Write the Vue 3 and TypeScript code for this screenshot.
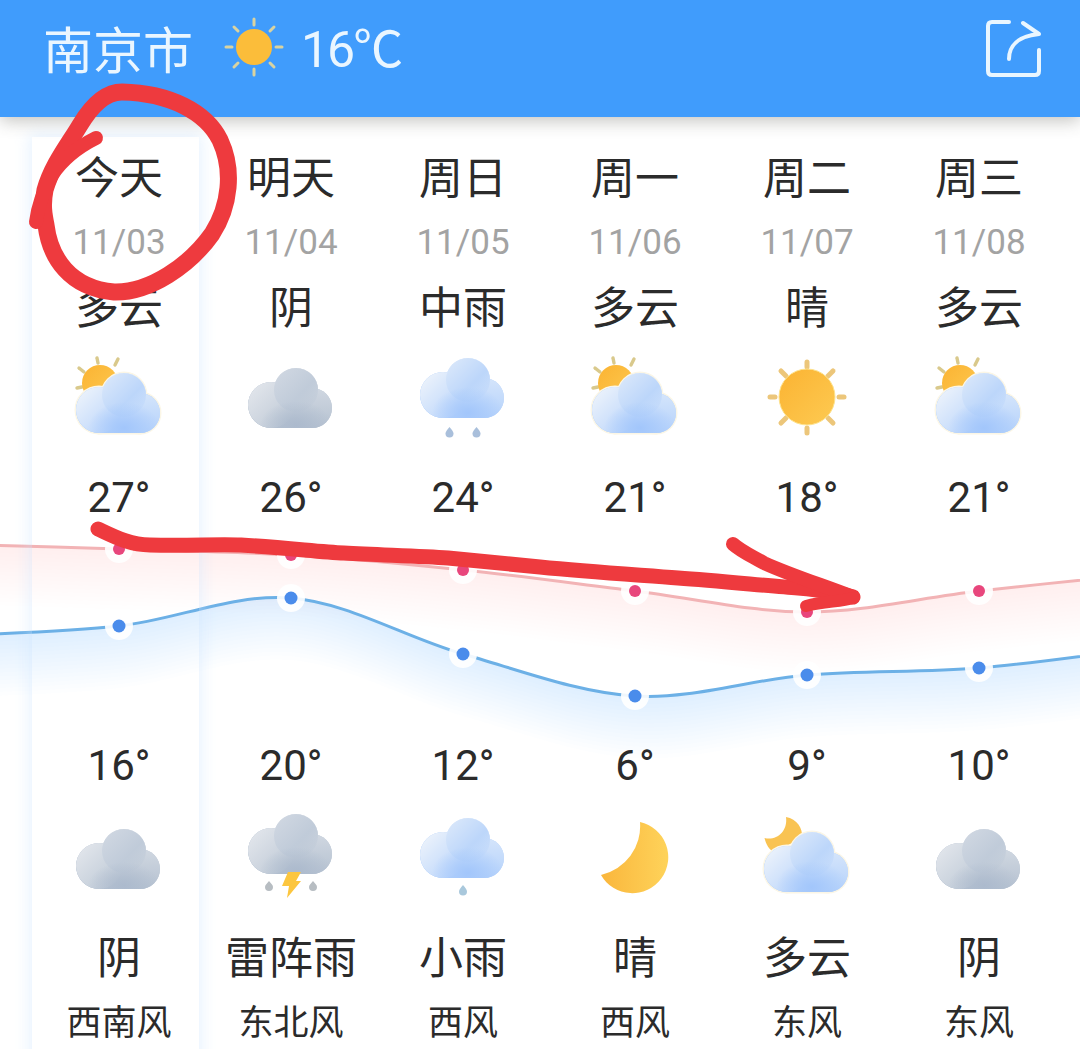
<script setup lang="ts">
type Pt = { x: number; y: number }
type Seg = { c1: Pt; c2: Pt; to: Pt }

const upper = [
  { name: '今天', date: '11/03', cond: '多云', icon: 'partly-day', high: 27 },
  { name: '明天', date: '11/04', cond: '阴', icon: 'overcast', high: 26 },
  { name: '周日', date: '11/05', cond: '中雨', icon: 'rain-mid', high: 24 },
  { name: '周一', date: '11/06', cond: '多云', icon: 'partly-day', high: 21 },
  { name: '周二', date: '11/07', cond: '晴', icon: 'sun', high: 18 },
  { name: '周三', date: '11/08', cond: '多云', icon: 'partly-day', high: 21 }
]
const lower = [
  { low: 16, icon: 'overcast', cond: '阴', wind: '西南风' },
  { low: 20, icon: 'thunder', cond: '雷阵雨', wind: '东北风' },
  { low: 12, icon: 'rain-light', cond: '小雨', wind: '西风' },
  { low: 6, icon: 'moon', cond: '晴', wind: '西风' },
  { low: 9, icon: 'partly-night', cond: '多云', wind: '东风' },
  { low: 10, icon: 'overcast', cond: '阴', wind: '东风' }
]

const CHART_TOP = 520
const xs = [119, 291, 463, 635, 807, 979]
const highY = [549, 555, 570, 591, 612, 591]
const lowY = [626, 598, 654, 696, 675, 668]

function points(ys: number[], start: number, end: number): Pt[] {
  const mid = ys.map((y, i) => ({ x: xs[i], y: y - CHART_TOP }))
  return [{ x: -53, y: start - CHART_TOP }, ...mid, { x: 1151, y: end - CHART_TOP }]
}

function segments(p: Pt[]): Seg[] {
  const out: Seg[] = []
  for (let i = 0; i < p.length - 1; i++) {
    const a = p[Math.max(i - 1, 0)]
    const b = p[i]
    const c = p[i + 1]
    const d = p[Math.min(i + 2, p.length - 1)]
    out.push({
      c1: { x: b.x + (c.x - a.x) / 6, y: b.y + (c.y - a.y) / 6 },
      c2: { x: c.x - (d.x - b.x) / 6, y: c.y - (d.y - b.y) / 6 },
      to: c
    })
  }
  return out
}

function linePath(p: Pt[]): string {
  const segs = segments(p)
  return `M${p[0].x} ${p[0].y}` + segs.map(s => ` C${s.c1.x} ${s.c1.y} ${s.c2.x} ${s.c2.y} ${s.to.x} ${s.to.y}`).join('')
}

function bandPath(p: Pt[], depth: number): string {
  const segs = segments(p)
  let d = linePath(p)
  const last = p[p.length - 1]
  d += ` L${last.x} ${last.y + depth}`
  for (let i = segs.length - 1; i >= 0; i--) {
    const s = segs[i]
    const prev = p[i]
    d += ` C${s.c2.x} ${s.c2.y + depth} ${s.c1.x} ${s.c1.y + depth} ${prev.x} ${prev.y + depth}`
  }
  return d + ' Z'
}

function bands(p: Pt[], reach: number): string[] {
  const list: string[] = []
  for (let i = 1; i <= 16; i++) list.push(bandPath(p, (reach * i) / 16))
  return list
}

const highPts = points(highY, 544, 573)
const lowPts = points(lowY, 636, 647)
const highLine = linePath(highPts)
const lowLine = linePath(lowPts)
const highBands = bands(highPts, 60)
const lowBands = bands(lowPts, 62)
const highDots = highPts.slice(1, -1)
const lowDots = lowPts.slice(1, -1)
</script>

<template>
  <svg class="defs" width="0" height="0" aria-hidden="true">
    <defs>
      <linearGradient id="g-grey" x1="0" y1="0" x2="0" y2="1">
        <stop offset="0" stop-color="#dde2e9" />
        <stop offset="1" stop-color="#b6c2d1" />
      </linearGradient>
      <linearGradient id="g-grey-left" x1="0" y1="0" x2="1" y2="1">
        <stop offset="0" stop-color="#e6e9ee" />
        <stop offset="1" stop-color="#b9c5d3" />
      </linearGradient>
      <linearGradient id="g-grey-mid" x1="0" y1="0" x2="1" y2="1">
        <stop offset="0" stop-color="#d2d9e3" />
        <stop offset="0.6" stop-color="#c0cbd9" />
        <stop offset="0.95" stop-color="#b9c5d4" stop-opacity="0" />
      </linearGradient>
      <radialGradient id="g-grey-core" cx="0.5" cy="0.5" r="0.5">
        <stop offset="0" stop-color="#acbacd" />
        <stop offset="1" stop-color="#acbacd" stop-opacity="0" />
      </radialGradient>
      <linearGradient id="g-blue" x1="0" y1="0" x2="0" y2="1">
        <stop offset="0" stop-color="#e4eefb" />
        <stop offset="1" stop-color="#b5d2fb" />
      </linearGradient>
      <linearGradient id="g-blue-left" x1="0" y1="0" x2="1" y2="1">
        <stop offset="0" stop-color="#f2f6fb" />
        <stop offset="1" stop-color="#b2d0fb" />
      </linearGradient>
      <linearGradient id="g-blue-mid" x1="0" y1="0" x2="1" y2="1">
        <stop offset="0" stop-color="#deeafa" />
        <stop offset="0.6" stop-color="#bcd6fa" />
        <stop offset="0.95" stop-color="#b5d2fb" stop-opacity="0" />
      </linearGradient>
      <radialGradient id="g-blue-core" cx="0.5" cy="0.5" r="0.5">
        <stop offset="0" stop-color="#a2c6fb" />
        <stop offset="1" stop-color="#a2c6fb" stop-opacity="0" />
      </radialGradient>
      <linearGradient id="g-sun" x1="0" y1="0" x2="1" y2="1">
        <stop offset="0" stop-color="#fbb332" />
        <stop offset="1" stop-color="#fdca52" />
      </linearGradient>
      <linearGradient id="g-moon" x1="0" y1="0" x2="1" y2="0">
        <stop offset="0" stop-color="#fab63c" />
        <stop offset="1" stop-color="#fed35a" />
      </linearGradient>

      <clipPath id="cloud-clip">
        <circle cx="30" cy="56" r="23" />
        <circle cx="55" cy="41" r="22" />
        <circle cx="71" cy="59" r="20" />
        <rect x="30" y="50" width="41" height="29" />
      </clipPath>

      <g id="cloud-shape">
        <circle cx="30" cy="56" r="23" />
        <circle cx="55" cy="41" r="22" />
        <circle cx="71" cy="59" r="20" />
        <rect x="30" y="50" width="41" height="29" />
      </g>

      <g id="cloud-grey">
        <use href="#cloud-shape" fill="#bcc7d5" />
        <g clip-path="url(#cloud-clip)">
          <rect x="0" y="19" width="100" height="60" fill="url(#g-grey)" />
          <circle cx="30" cy="56" r="23" fill="url(#g-grey-left)" />
          <circle cx="55" cy="41" r="22" fill="url(#g-grey-mid)" />
          <ellipse cx="55" cy="76" rx="36" ry="24" fill="url(#g-grey-core)" />
        </g>
      </g>

      <g id="cloud-blue">
        <use href="#cloud-shape" fill="#b8d3fa" />
        <g clip-path="url(#cloud-clip)">
          <rect x="0" y="19" width="100" height="60" fill="url(#g-blue)" />
          <circle cx="30" cy="56" r="23" fill="url(#g-blue-left)" />
          <circle cx="55" cy="41" r="22" fill="url(#g-blue-mid)" />
          <ellipse cx="55" cy="74" rx="36" ry="26" fill="url(#g-blue-core)" />
        </g>
      </g>

      <g id="i-overcast">
        <use href="#cloud-grey" />
      </g>

      <g id="i-partly-day">
        <g stroke="#d9c98c" stroke-width="3.4" stroke-linecap="round">
          <path d="M10 19 L15 23" />
          <path d="M28 9 L29 14" />
          <path d="M49 10 L46 16" />
          <path d="M8 39 L13 38" />
        </g>
        <circle cx="31" cy="34" r="18" fill="url(#g-sun)" />
        <g transform="translate(0 5)">
          <use href="#cloud-shape" fill="#fbf6e6" stroke="#fbf6e6" stroke-width="3" />
          <use href="#cloud-blue" />
        </g>
      </g>

      <g id="i-sun">
        <g stroke="#ecc67a" stroke-width="5" stroke-linecap="round">
          <path d="M50 13 L50 18" />
          <path d="M50 79 L50 84" />
          <path d="M13 48 L18 48" />
          <path d="M82 48 L87 48" />
          <path d="M24 22 L29 27" />
          <path d="M76 22 L71 27" />
          <path d="M24 74 L29 69" />
          <path d="M76 74 L71 69" />
        </g>
        <circle cx="50" cy="48" r="28" fill="url(#g-sun)" stroke="#fde28c" stroke-width="1" />
      </g>

      <g id="i-rain-mid">
        <g transform="translate(0 -10)">
          <use href="#cloud-blue" />
        </g>
        <path d="M36.500 78 C39 81 40.500 83 40.500 84.500 A4 4 0 0 1 32.500 84.500 C32.500 83 34 81 36.500 78 Z" fill="#a9bfdb" />
        <path d="M63.500 78 C66 81 67.500 83 67.500 84.500 A4 4 0 0 1 59.500 84.500 C59.500 83 61 81 63.500 78 Z" fill="#a9bfdb" />
      </g>

      <g id="i-rain-light">
        <g transform="translate(0 -11)">
          <use href="#cloud-blue" />
        </g>
        <path d="M50 75 C52.500 78 54 80 54 81.500 A4 4 0 0 1 46 81.500 C46 80 47.500 78 50 75 Z" fill="#a9c8dc" />
      </g>

      <g id="i-thunder">
        <g transform="translate(0 -15)">
          <use href="#cloud-grey" />
        </g>
        <path d="M47 62 L60 62 L55 71 L60 71 L46 88 L48 76 L41 76 Z" fill="#fcc63f" />
        <path d="M28 71 C30 73.500 32 75 32 77 A4 4 0 0 1 24 77 C24 75 26 73.500 28 71 Z" fill="#b7bdc2" />
        <path d="M72 71 C74 73.500 76 75 76 77 A4 4 0 0 1 68 77 C68 75 70 73.500 72 71 Z" fill="#b7bdc2" />
      </g>

      <g id="i-moon">
        <path d="M55 12 A36 36 0 1 1 16 65 A50 50 0 0 0 55 12 Z" fill="url(#g-moon)" />
      </g>

      <g id="i-partly-night">
        <path d="M29 7 C40 9 46 18 45 28 L17 42 C12 40 9 34 7.500 28 C19 31 31 22 29 7 Z" fill="#f9c352" />
        <g transform="translate(0 3)">
          <use href="#cloud-shape" fill="#fbf6e6" stroke="#fbf6e6" stroke-width="3" />
          <use href="#cloud-blue" />
        </g>
      </g>
    </defs>
  </svg>

  <main class="page">
    <header class="topbar">
      <h1 class="city">南京市</h1>
      <svg class="now-icon" viewBox="0 0 60 60" aria-hidden="true">
        <g stroke="#d9d3a0" stroke-width="3" stroke-linecap="round">
          <path d="M30 2 L30 8" />
          <path d="M30 52 L30 58" />
          <path d="M2 30 L8 30" />
          <path d="M52 30 L58 30" />
          <path d="M10 10 L14 14" />
          <path d="M50 10 L46 14" />
          <path d="M10 50 L14 46" />
          <path d="M50 50 L46 46" />
        </g>
        <circle cx="30" cy="30" r="18" fill="#fbbd3a" />
      </svg>
      <span class="now-temp">16℃</span>
      <svg class="share" viewBox="0 0 60 60" aria-hidden="true">
        <path d="M25 4 L8 4 Q4 4 4 8 L4 53 Q4 57 8 57 L51 57 Q55 57 55 53 L55 32" fill="none" stroke="#e9f6ff" stroke-width="4" stroke-linecap="round" stroke-linejoin="round" />
        <path d="M25 41 C25 28 34 18 55 16 L39 5" fill="none" stroke="#e9f6ff" stroke-width="4" stroke-linecap="round" stroke-linejoin="round" />
      </svg>
    </header>

    <section class="board">
      <div class="days">
        <div v-for="d in upper" :key="d.date" class="day">
          <div class="name">{{ d.name }}</div>
          <div class="date">{{ d.date }}</div>
          <div class="cond cond-top">{{ d.cond }}</div>
          <svg class="ico ico-top" viewBox="0 0 100 100" aria-hidden="true"><use :href="'#i-' + d.icon" /></svg>
          <div class="temp temp-high">{{ d.high }}°</div>
        </div>
      </div>

      <svg class="chart" width="1080" height="224" viewBox="0 0 1080 224" aria-hidden="true">
        <path v-for="(b, i) in highBands" :key="'h' + i" :d="b" fill="#f98f92" opacity="0.011" />
        <path v-for="(b, i) in lowBands" :key="'l' + i" :d="b" fill="#7ab0f0" opacity="0.013" />
        <path :d="highLine" fill="none" stroke="#f2b3b5" stroke-width="3" />
        <path :d="lowLine" fill="none" stroke="#6cb0e6" stroke-width="3" />
        <g v-for="p in highDots" :key="'hd' + p.x">
          <circle :cx="p.x" :cy="p.y" r="14" fill="#fff" opacity="0.9" />
          <circle :cx="p.x" :cy="p.y" r="6" fill="#e8467c" />
        </g>
        <g v-for="p in lowDots" :key="'ld' + p.x">
          <circle :cx="p.x" :cy="p.y" r="14" fill="#fff" opacity="0.9" />
          <circle :cx="p.x" :cy="p.y" r="6.500" fill="#4a8ceb" />
        </g>
      </svg>

      <div class="days">
        <div v-for="d in lower" :key="d.low + d.wind" class="day">
          <div class="temp">{{ d.low }}°</div>
          <svg class="ico ico-bottom" viewBox="0 0 100 100" aria-hidden="true"><use :href="'#i-' + d.icon" /></svg>
          <div class="cond cond-bottom">{{ d.cond }}</div>
          <div class="wind">{{ d.wind }}</div>
        </div>
      </div>

      <div class="today-glow"></div>
    </section>

    <svg class="ink" viewBox="0 0 1080 1049" aria-hidden="true">
      <g fill="none" stroke="#ee3a3e" stroke-linecap="round" stroke-linejoin="round">
        <path stroke-width="17" d="M46 225 C50 258 70 288 114 292 C150 293 190 265 212 234 C230 206 234 170 220 140 C206 112 170 93 122 92 C105 92 92 105 80 125 C68 145 52 165 45 190 C42 205 44 215 46 225" />
        <path stroke-width="14" d="M96 138 C78 147 62 160 52 175 C44 190 38 205 36 222" />
        <path stroke-width="15" d="M98 529 C115 537 130 545 150 545 C190 546 215 544 241 545 C290 548 320 552 344 553 C380 555 420 556 448 558 C480 561 510 564 540 567 C590 572 640 575 678 578 C720 581 770 586 798 588 C820 590 840 593 853 597" />
        <path stroke-width="14" d="M733 544 C742 552 752 556 764 563 C790 575 825 586 853 597" />
        <path stroke-width="12" d="M853 598 C840 602 825 601 806 606" />
      </g>
    </svg>
  </main>
</template>

<style scoped>
.defs {
  position: absolute;
  width: 0;
  height: 0;
}
.page {
  position: relative;
  width: 1080px;
  height: 1049px;
  overflow: hidden;
  background: #fff;
  color: #2b2b2b;
  font-family: Roboto, "Noto Sans CJK SC", sans-serif;
}
.topbar {
  position: relative;
  z-index: 2;
  display: flex;
  align-items: center;
  height: 117px;
  padding: 0 36px 17px 43px;
  box-sizing: border-box;
  background: #409cfc;
  color: #eaf6ff;
  box-shadow: 0 4px 16px rgba(60, 60, 50, 0.3);
}
.city {
  margin: 3px 0 0;
  font-size: 50px;
  font-weight: 400;
  line-height: 60px;
}
.now-icon {
  width: 60px;
  height: 60px;
  margin: -6px 0 0 31px;
}
.now-temp {
  margin-left: 17px;
  font-size: 50px;
  line-height: 60px;
  letter-spacing: -2px;
}
.share {
  width: 60px;
  height: 60px;
  margin: -4px 0 0 auto;
}
.board {
  position: relative;
}
.days {
  display: grid;
  grid-template-columns: repeat(6, 172px);
  padding-left: 33px;
}
.day {
  display: flex;
  flex-direction: column;
  align-items: center;
  min-width: 0;
}
.name {
  margin-top: 32px;
  font-size: 44px;
  line-height: 60px;
}
.date {
  margin-top: 11px;
  font-size: 35px;
  line-height: 46px;
  color: #a3a3a3;
}
.cond {
  font-size: 44px;
  line-height: 60px;
  white-space: nowrap;
}
.cond-top {
  margin-top: 13px;
}
.cond-bottom {
  margin-top: 19px;
}
.ico {
  display: block;
  width: 100px;
  height: 100px;
}
.ico-top {
  margin-top: 10px;
}
.ico-bottom {
  margin-top: 22px;
}
.temp {
  font-size: 42px;
  line-height: 44px;
}
.temp-high {
  margin-top: 27px;
}
.chart {
  display: block;
  overflow: visible;
}
.wind {
  margin-top: 11px;
  font-size: 35px;
  line-height: 48px;
  white-space: nowrap;
}
.today-glow {
  position: absolute;
  top: 20px;
  bottom: -30px;
  left: 32px;
  width: 167px;
  box-shadow: 0 0 14px 3px rgba(205, 228, 255, 0.45);
  pointer-events: none;
}
.ink {
  position: absolute;
  top: 0;
  left: 0;
  z-index: 3;
  width: 1080px;
  height: 1049px;
  pointer-events: none;
}
</style>

<style>
html,
body {
  margin: 0;
  background: #fff;
  overflow: hidden;
}
</style>
